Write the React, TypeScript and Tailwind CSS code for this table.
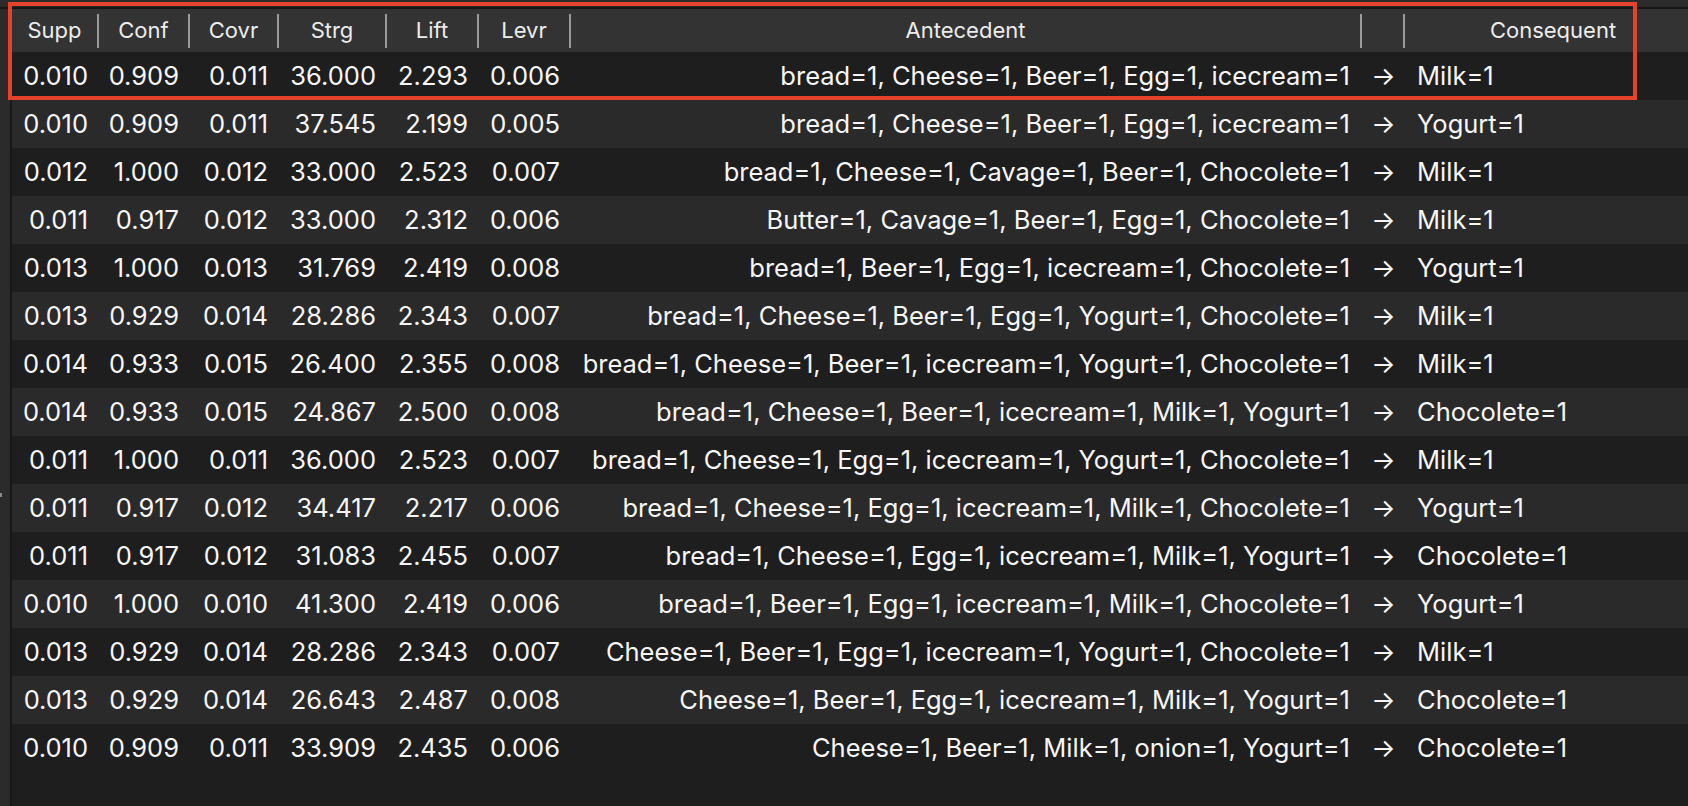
const cols = "grid grid-cols-[87px_91px_89px_108px_92px_92px_791px_43px_296px]";

const headers = ["Supp", "Conf", "Covr", "Strg", "Lift", "Levr", "Antecedent", "", "Consequent"];

type Rule = { n: string[]; a: string; c: string };

const rules: Rule[] = [
  { n: ["0.010", "0.909", "0.011", "36.000", "2.293", "0.006"], a: "bread=1, Cheese=1, Beer=1, Egg=1, icecream=1", c: "Milk=1" },
  { n: ["0.010", "0.909", "0.011", "37.545", "2.199", "0.005"], a: "bread=1, Cheese=1, Beer=1, Egg=1, icecream=1", c: "Yogurt=1" },
  { n: ["0.012", "1.000", "0.012", "33.000", "2.523", "0.007"], a: "bread=1, Cheese=1, Cavage=1, Beer=1, Chocolete=1", c: "Milk=1" },
  { n: ["0.011", "0.917", "0.012", "33.000", "2.312", "0.006"], a: "Butter=1, Cavage=1, Beer=1, Egg=1, Chocolete=1", c: "Milk=1" },
  { n: ["0.013", "1.000", "0.013", "31.769", "2.419", "0.008"], a: "bread=1, Beer=1, Egg=1, icecream=1, Chocolete=1", c: "Yogurt=1" },
  { n: ["0.013", "0.929", "0.014", "28.286", "2.343", "0.007"], a: "bread=1, Cheese=1, Beer=1, Egg=1, Yogurt=1, Chocolete=1", c: "Milk=1" },
  { n: ["0.014", "0.933", "0.015", "26.400", "2.355", "0.008"], a: "bread=1, Cheese=1, Beer=1, icecream=1, Yogurt=1, Chocolete=1", c: "Milk=1" },
  { n: ["0.014", "0.933", "0.015", "24.867", "2.500", "0.008"], a: "bread=1, Cheese=1, Beer=1, icecream=1, Milk=1, Yogurt=1", c: "Chocolete=1" },
  { n: ["0.011", "1.000", "0.011", "36.000", "2.523", "0.007"], a: "bread=1, Cheese=1, Egg=1, icecream=1, Yogurt=1, Chocolete=1", c: "Milk=1" },
  { n: ["0.011", "0.917", "0.012", "34.417", "2.217", "0.006"], a: "bread=1, Cheese=1, Egg=1, icecream=1, Milk=1, Chocolete=1", c: "Yogurt=1" },
  { n: ["0.011", "0.917", "0.012", "31.083", "2.455", "0.007"], a: "bread=1, Cheese=1, Egg=1, icecream=1, Milk=1, Yogurt=1", c: "Chocolete=1" },
  { n: ["0.010", "1.000", "0.010", "41.300", "2.419", "0.006"], a: "bread=1, Beer=1, Egg=1, icecream=1, Milk=1, Chocolete=1", c: "Yogurt=1" },
  { n: ["0.013", "0.929", "0.014", "28.286", "2.343", "0.007"], a: "Cheese=1, Beer=1, Egg=1, icecream=1, Yogurt=1, Chocolete=1", c: "Milk=1" },
  { n: ["0.013", "0.929", "0.014", "26.643", "2.487", "0.008"], a: "Cheese=1, Beer=1, Egg=1, icecream=1, Milk=1, Yogurt=1", c: "Chocolete=1" },
  { n: ["0.010", "0.909", "0.011", "33.909", "2.435", "0.006"], a: "Cheese=1, Beer=1, Milk=1, onion=1, Yogurt=1", c: "Chocolete=1" },
];

export default function App() {
  return (
    <div className="relative w-[1688px] h-[806px] overflow-hidden bg-[#2b2b2b] font-['Inter',sans-serif] text-[#f6f6f6]">
      <div className="h-[7px]" />
      <div className="h-[2px] bg-[#151515]" />
      <div className="flex h-[797px]">
        <div className="w-[10px] shrink-0 bg-[#2b2b2b] relative">
          {/* tiny marker on the left edge */}
          <div className="absolute left-0 top-[484px] w-[2px] h-[4px] bg-[#8a8a8a]" />
        </div>
        <div className="w-[2px] shrink-0 bg-[#171717]" />
        <div className="flex-1 bg-[#1e1e1e] overflow-hidden">
          {/* header */}
          <div className={`${cols} h-[43px] bg-[#333333] text-[#ececec] text-[22px]`}>
            {headers.map((h, i) => (
              <div key={i} className="flex items-center h-full">
                <span className="flex-1 text-center whitespace-nowrap">{h}</span>
                {i < 8 && <div className="w-[2px] h-[34px] bg-[#9b9b9b]" />}
              </div>
            ))}
          </div>

          {/* rows */}
          {rules.map((r, i) => (
            <div
              key={i}
              className={`${cols} h-[48px] items-center text-[25.5px] ${i % 2 === 1 ? "bg-[#2a2a2a]" : "bg-[#1e1e1e]"}`}
            >
              {r.n.map((v, j) => (
                <div key={j} className="text-right pr-[11px] whitespace-nowrap">
                  {v}
                </div>
              ))}
              <div className="text-right pr-[12px] whitespace-nowrap">{r.a}</div>
              <div className="text-center">→</div>
              <div className="pl-[12px] whitespace-nowrap">{r.c}</div>
            </div>
          ))}
        </div>
      </div>

      {/* highlighted row outline */}
      <div className="absolute left-[8px] top-[2px] w-[1629px] h-[98px] border-[4px] border-[#e5412b]" />
    </div>
  );
}
